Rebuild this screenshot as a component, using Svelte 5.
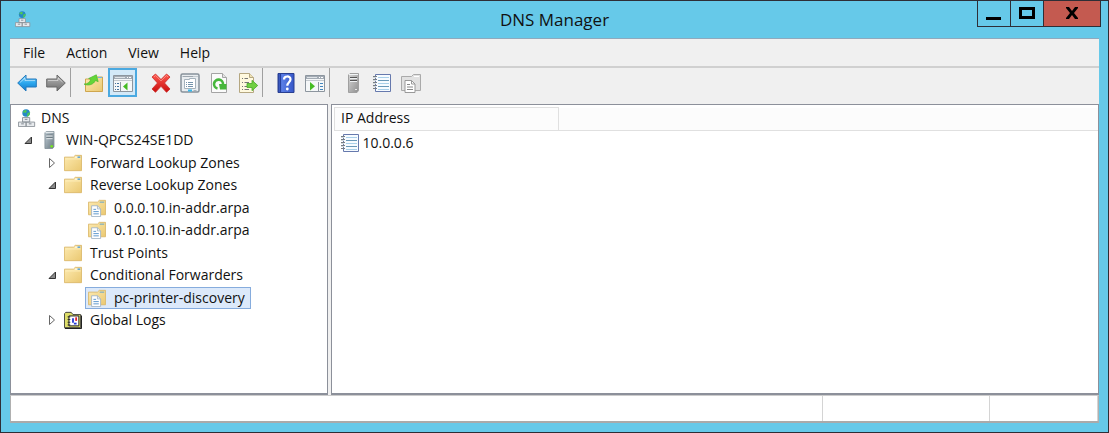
<script lang="ts">
	interface Node {
		label: string;
		icon: string;
		depth: number;
		open?: boolean;
	}

	interface Tool {
		icon: string;
		label: string;
	}

	const menus = ['File', 'Action', 'View', 'Help'];

	const toolGroups: { line: boolean; tools: Tool[] }[] = [
		{ line: true, tools: [{ icon: 'back', label: 'Back' }, { icon: 'forward', label: 'Forward' }] },
		{ line: false, tools: [{ icon: 'up', label: 'Up one level' }, { icon: 'tree', label: 'Show/Hide Console Tree' }] },
		{
			line: true,
			tools: [
				{ icon: 'delete', label: 'Delete' },
				{ icon: 'properties', label: 'Properties' },
				{ icon: 'refresh', label: 'Refresh' },
				{ icon: 'export', label: 'Export List' }
			]
		},
		{ line: true, tools: [{ icon: 'help', label: 'Help' }, { icon: 'actions', label: 'Show/Hide Action Pane' }] },
		{
			line: false,
			tools: [
				{ icon: 'graytower', label: 'New server' },
				{ icon: 'record', label: 'New record' },
				{ icon: 'grayzone', label: 'New zone' }
			]
		}
	];

	const nodes: Node[] = [
		{ label: 'DNS', icon: 'dns', depth: 0 },
		{ label: 'WIN-QPCS24SE1DD', icon: 'server', depth: 1, open: true },
		{ label: 'Forward Lookup Zones', icon: 'folder', depth: 2, open: false },
		{ label: 'Reverse Lookup Zones', icon: 'folder', depth: 2, open: true },
		{ label: '0.0.0.10.in-addr.arpa', icon: 'zone', depth: 3 },
		{ label: '0.1.0.10.in-addr.arpa', icon: 'zone', depth: 3 },
		{ label: 'Trust Points', icon: 'folder', depth: 2 },
		{ label: 'Conditional Forwarders', icon: 'folder', depth: 2, open: true },
		{ label: 'pc-printer-discovery', icon: 'zone', depth: 3 },
		{ label: 'Global Logs', icon: 'logs', depth: 2, open: false }
	];

	const addresses = ['10.0.0.6'];

	let selected = $state('pc-printer-discovery');
	let showTree = $state(true);
</script>

<!-- gradients shared by the icons -->
<svg class="defs" width="0" height="0" aria-hidden="true">
	<defs>
		<linearGradient id="g-blue" x1="0" y1="0" x2="0" y2="1">
			<stop offset="0" stop-color="#8fdcff" /><stop offset=".5" stop-color="#2ba7ee" /><stop offset="1" stop-color="#1478c8" />
		</linearGradient>
		<linearGradient id="g-gray" x1="0" y1="0" x2="0" y2="1">
			<stop offset="0" stop-color="#b9b9b9" /><stop offset="1" stop-color="#6c6c6c" />
		</linearGradient>
		<linearGradient id="g-folder" x1="0" y1="0" x2="1" y2="1">
			<stop offset="0" stop-color="#fdeab0" /><stop offset="1" stop-color="#eac871" />
		</linearGradient>
		<linearGradient id="g-red" x1="0" y1="0" x2="0" y2="1">
			<stop offset="0" stop-color="#ff5a50" /><stop offset="1" stop-color="#c80c0c" />
		</linearGradient>
		<linearGradient id="g-help" x1="0" y1="0" x2="1" y2="0">
			<stop offset="0" stop-color="#2743a8" /><stop offset=".25" stop-color="#5b7ee6" /><stop offset="1" stop-color="#3556c8" />
		</linearGradient>
		<linearGradient id="g-tower" x1="0" y1="0" x2="1" y2="1">
			<stop offset="0" stop-color="#c3d0d8" /><stop offset="1" stop-color="#66757e" />
		</linearGradient>
		<linearGradient id="g-pale" x1="0" y1="0" x2="1" y2="1">
			<stop offset="0" stop-color="#d6d6d6" /><stop offset="1" stop-color="#8f8f8f" />
		</linearGradient>
	</defs>
</svg>

{#snippet page(edge: string, line: string)}
	<path d="M4 7.500h6.500l3.500 3.500v8.500H4z" fill="#fff" stroke={edge} />
	<path d="M10.500 7.500V11H14" fill="none" stroke={edge} />
	<path d="M6 11.500h3M6 14h6M6 16.500h6" stroke={line} />
{/snippet}

{#snippet icon(name: string)}
	<svg class="icon" viewBox="0 0 20 20" aria-hidden="true">
		{#if name === 'back' || name === 'forward'}
			<path
				d={name === 'back' ? 'M.7 10 9 2v4h10.300v8H9v4z' : 'M19.300 10 11 2v4H.7v8H11v4z'}
				fill={name === 'back' ? 'url(#g-blue)' : 'url(#g-gray)'}
				stroke={name === 'back' ? '#2379bd' : '#696969'}
				stroke-linejoin="round"
			/>
			<path d={name === 'back' ? 'M3 9.500 8 5v2.500h10' : 'M2 7.500h10V5l4.500 4'} fill="none" stroke="#fff" opacity=".45" />
		{:else if name === 'up'}
			<path d="M1.500 18.500V6h9l2-2h6v14.500z" fill="url(#g-folder)" stroke="#cfa64e" />
			<path d="M14 4.500h4" stroke="#6fb5e8" />
			<path d="M2 14.500c3-1 4.500-4 4.500-7H4L9.500 1l4.500 5.500h-3c0 4.500-4 8-9 8z" transform="rotate(24 9 8)" fill="#63d638" stroke="#48b52b" stroke-width=".6" />
		{:else if name === 'tree' || name === 'actions'}
			<path d="M.5 2.500h19v16H.5z" fill="#f5f7f8" stroke="#8c959e" />
			<path d="M1 3h18v3H1z" fill="#a3abb4" />
			<path d="M2 4.500h10" stroke="#dfe4e8" /><path d="M14 4.500h1m1 0h2" stroke="#fff" />
			<path d="M1 7.500h18" stroke="#c3c9ce" />
			{#if name === 'tree'}
				<path d="M7.500 9v9" stroke="#8c959e" />
				<path d="M2 10.500h1m1 0h2M2 13.500h1m1 0h2M2 16.500h1m1 0h2" stroke="#45749f" />
				<path d="M14.500 9.500v8L10 13.500z" fill="#45bc23" />
			{:else}
				<path d="M13.500 9v9" stroke="#8c959e" />
				<path d="M15 10.500h3M15 13.500h3M15 16.500h3" stroke="#4185bd" />
				<path d="M5 9v8.500l5-4.200z" fill="#45bc23" />
			{/if}
		{:else if name === 'delete'}
			<path d="M1 4 4.500 1 10 6.500 15.500 1 19 4l-5.500 6 5.500 6-3.500 3.300-5.500-6-5.500 6L1 16l5.500-6z" fill="url(#g-red)" stroke="#cb2a26" stroke-width=".8" stroke-linejoin="round" />
			<path d="M3 4 4.500 2.500 10 8l5.500-5.500L17 4" fill="none" stroke="#ff9b92" opacity=".7" />
		{:else if name === 'properties'}
			<rect x="1" y="1" width="18" height="18" rx="1.500" fill="#e9edf0" stroke="#87919a" stroke-width="1.500" />
			<path d="M2.500 3.500h15" stroke="#9da6ae" stroke-dasharray="11 1 1 1" />
			<path d="M4.500 6.500h5v-1h6v10h-11z" fill="#fff" stroke="#a5b2bc" />
			<path d="M6 9.500h1m1 0h5M6 11.500h1m1 0h5M6 13.500h1m1 0h5" stroke="#7593ab" />
			<path d="M8 17.500h4" stroke="#35b8ec" stroke-width="2" /><path d="M13.500 17.500h3" stroke="#a7b2ba" />
		{:else if name === 'refresh'}
			<path d="M2.500.5h11l4 4v15h-15z" fill="#fbfbfb" stroke="#a4a4a4" />
			<path d="M13.500.5v4h4" fill="#e4e4e4" stroke="#a4a4a4" />
			<path d="M8.500 15.500A4.500 4.500 0 1 1 14 11.500" fill="none" stroke="#46b73b" stroke-width="2.600" />
			<path d="M10 11h7.500v5.500H11z" fill="#46b73b" />
		{:else if name === 'export'}
			<path d="M1.500.5h10l4 4v15h-14z" fill="#fff9df" stroke="#b5a781" />
			<path d="M11.500.5v4h4" fill="#eee2b7" stroke="#b5a781" />
			<path d="M4 5.500h1m1.500 0H10M4 9.500h1m1.500 0H11M4 13.500h1m1.500 0H11M4 16.500h1m1.500 0H11" stroke="#777" />
			<path d="M9 10.500h5V7.300l5.700 5.200-5.700 5.200v-3.200H9z" fill="#70cf42" stroke="#48a82a" stroke-width=".8" />
		{:else if name === 'help'}
			<path d="M2 .5h16v19H2z" fill="url(#g-help)" stroke="#293f91" />
			<path d="M4.500 1v18" stroke="#263f9c" />
			<path d="M8 6.500c0-4 6.500-4 6.500-.2 0 3-3.200 3-3.200 6.500" fill="none" stroke="#fff" stroke-width="2.200" />
			<circle cx="11.300" cy="16" r="1.400" fill="#fff" />
		{:else if name === 'server' || name === 'graytower'}
			<path d="M5.500 2 7 .5h8.500v17L14 19.500H5.500z" fill={name === 'server' ? 'url(#g-tower)' : 'url(#g-pale)'} stroke={name === 'server' ? '#83919a' : '#a0a0a0'} />
			<path d="M6 1.500h9" stroke="#f1f4f5" />
			<path d="M7 4.500h7M7 7.500h7" stroke={name === 'server' ? '#59666e' : '#555'} />
			<path d="M7 5.500h7M7 8.500h7" stroke="#edf0f2" />
			{#if name === 'server'}<circle cx="13" cy="17" r="1.500" fill="#76e521" />{:else}<path d="M12 16.500h2" stroke="#e7e7e7" />{/if}
		{:else if name === 'record'}
			<path d="M3.500 1.500h15v17h-15z" fill="#f6fbff" stroke="#6679ad" />
			<path d="M6 4.500h11M6 10.500h11M6 16.500h11" stroke="#a9d0e9" />
			<path d="M6 7.500h11M6 13.500h11" stroke="#6898b8" />
			<path d="M1 3.500h4M1 6.500h4M1 9.500h4M1 12.500h4M1 15.500h4" stroke="#777f85" />
			<path d="M1 4.500h3M1 7.500h3M1 10.500h3M1 13.500h3" stroke="#d3d8db" />
		{:else if name === 'folder'}
			<path d="M.5 18.500V3.500h10l2-2h7v17z" fill="url(#g-folder)" stroke="#dbb96b" />
			<path d="M12 3.500h6" stroke="#fff9e5" stroke-width="1.500" /><path d="M15 3.500h3" stroke="#4797d1" stroke-width="1.500" />
			<path d="M1.500 5.500h17" stroke="#fff0bd" />
		{:else if name === 'zone' || name === 'grayzone'}
			<path d="M.5 17.500v-14h10l2-2h7v16z" fill={name === 'zone' ? 'url(#g-folder)' : '#e1e1e1'} stroke={name === 'zone' ? '#dbb96b' : '#aaa'} />
			<path d="M13 3.500h5" stroke={name === 'zone' ? '#589fce' : '#fff'} />
			{@render page(name === 'zone' ? '#a3b5c6' : '#999', name === 'zone' ? '#4f8fc9' : '#888')}
		{:else if name === 'dns'}
			<circle cx="9" cy="4.500" r="4.200" fill="#2588c7" />
			<path d="M5.500 3c2-3 5-2 4 0s-1 1.500-2 1-2 1-2-1zm5 1.500 3-1c0 3-1.500 4.500-3.500 5z" fill="#4dc956" />
			<path d="M5 9.500h8v5H5zM.5 14.500H9v5H.5zM9 14.500h9.500v5H9z" fill="#e7eaed" stroke="#8b9298" />
			<path d="M7.500 11.500h3M3.500 16.500h3M12 16.500h3" stroke="#777f88" />
		{:else if name === 'logs'}
			<path d="M.5 18.500V3L2 1.500h6L10 4h8.500v14.500z" fill="#dede6a" stroke="#333" />
			<path d="M1 19.500h18.500V5" fill="none" stroke="#000" />
			<path d="M5.500 5.500h11v11h-11z" fill="#fff" stroke="#111" />
			<path d="M4 6.500h3M4 9.500h3M4 12.500h3M4 15.500h3" stroke="#222" />
			<path d="M9 8h2v5H9z" fill="#2539d5" /><path d="M12.500 7h2v4h-2z" fill="#e0212c" /><path d="M11 13h3v2h-3z" fill="#2539d5" />
		{/if}
	</svg>
{/snippet}

<div class="window">
	<header class="titlebar">
		<div class="app-icon">{@render icon('dns')}</div>
		<h1>DNS Manager</h1>
		<div class="controls">
			<button aria-label="Minimize">
				<svg width="16" height="14" viewBox="0 0 16 14"><path d="M0 11h15v3H0z" /></svg>
			</button>
			<button aria-label="Maximize">
				<svg width="16" height="14" viewBox="0 0 16 14"><path d="M0 1h16v12H0zm3 3v6h10V4z" fill-rule="evenodd" /></svg>
			</button>
			<button class="close" aria-label="Close">
				<svg width="14" height="14" viewBox="0 0 14 14"><path d="M1 1h3l3 4 3-4h3v1L9 7l4 5v1h-3L7 9l-3 4H1v-1l4-5-4-5z" /></svg>
			</button>
		</div>
	</header>

	<div class="client">
		<nav class="menubar">
			{#each menus as m}
				<button>{m}</button>
			{/each}
		</nav>

		<div class="toolbar" role="toolbar" aria-label="Standard">
			{#each toolGroups as group, i}
				<div class="group">
					{#each group.tools as t}
						{#if t.icon === 'tree'}
							<button class:pressed={showTree} aria-label={t.label} aria-pressed={showTree} onclick={() => (showTree = !showTree)}>
								{@render icon(t.icon)}
							</button>
						{:else}
							<button aria-label={t.label}>{@render icon(t.icon)}</button>
						{/if}
					{/each}
				</div>
				{#if i < toolGroups.length - 1}
					<span class="sep" class:line={group.line}></span>
				{/if}
			{/each}
		</div>

		<main class="panes">
			{#if showTree}
				<ul class="pane tree">
					{#each nodes as n}
						<li class="depth-{n.depth}">
							{#if n.open !== undefined}
								<button class="expander" aria-label={n.open ? 'Collapse' : 'Expand'} aria-expanded={n.open}>
									<svg width="10" height="12" viewBox="0 0 10 12">
										{#if n.open}
											<path d="M8.500 3v6.500H2z" fill="#8a8a8a" stroke="#333" />
										{:else}
											<path d="M2.500 1.500v9l5-4.500z" fill="#fff" stroke="#666" />
										{/if}
									</svg>
								</button>
							{:else if n.depth > 0}
								<span class="expander"></span>
							{/if}
							<button class="item" class:selected={selected === n.label} onclick={() => (selected = n.label)}>
								{@render icon(n.icon)}
								<span>{n.label}</span>
							</button>
						</li>
					{/each}
				</ul>
			{/if}

			<section class="pane list">
				<table>
					<thead>
						<tr><th>IP Address</th><td></td></tr>
					</thead>
					<tbody>
						{#each addresses as ip}
							<tr>
								<td colspan="2"><div class="cell">{@render icon('record')}{ip}</div></td>
							</tr>
						{/each}
					</tbody>
				</table>
			</section>
		</main>

		<footer class="status">
			<span></span>
			<span></span>
			<span></span>
		</footer>
	</div>
</div>

<style>
	:global(body) {
		margin: 0;
	}

	.defs {
		position: absolute;
	}

	.window {
		display: flex;
		flex-direction: column;
		box-sizing: border-box;
		min-height: 100vh;
		padding: 0 9px 9px;
		border: 1px solid #2e2e36;
		background: #66c9e9;
		color: #111;
		font: 14px/20px "Open Sans", "Noto Sans", sans-serif;
	}

	button {
		margin: 0;
		padding: 0;
		border: 0;
		background: none;
		color: inherit;
		font: inherit;
	}

	svg {
		display: block;
		flex: none;
	}

	.icon {
		width: 20px;
		height: 20px;
	}

	.titlebar {
		display: grid;
		grid-template-columns: 1fr auto 1fr;
		height: 37px;
	}

	.app-icon {
		padding: 8px 5px;
	}

	.app-icon .icon {
		width: 16px;
	}

	h1 {
		margin: 0;
		font-size: 17px;
		font-weight: 400;
		line-height: 38px;
	}

	.controls {
		display: flex;
		justify-self: end;
		height: 25px;
		border: 1px solid #2e2e36;
		border-top: 0;
		margin-right: -2px;
	}

	.controls button {
		display: grid;
		place-items: center;
		width: 33px;
		padding-bottom: 2px;
		border-right: 1px solid #2e2e36;
	}

	.controls .close {
		width: 56px;
		border: 0;
		background: #c45a50;
	}

	.client {
		display: flex;
		flex: 1;
		flex-direction: column;
		border-top: 1px solid #8fa9bd;
		background: #f0f0f0;
	}

	.menubar {
		display: flex;
		gap: 21px;
		height: 27px;
		padding-left: 13px;
		border-bottom: 2px solid #d0d0d0;
	}

	.toolbar {
		display: flex;
		height: 29px;
		padding: 0 2px 7px;
	}

	.group {
		display: flex;
	}

	.toolbar button {
		display: grid;
		place-items: center;
		box-sizing: border-box;
		width: 29px;
		height: 29px;
	}

	.toolbar .pressed {
		border: 2px solid #4ba9e0;
		background: #d3e9f8;
	}

	.sep {
		box-sizing: border-box;
		width: 9px;
	}

	.sep.line {
		border-left: 1px solid #a0a0a0;
	}

	.panes {
		display: flex;
		flex: 1;
		gap: 3px;
	}

	.pane {
		box-sizing: border-box;
		border: 1px solid #8c909a;
		border-bottom-width: 2px;
		background: #fff;
	}

	.tree {
		width: 318px;
		margin: 0;
		padding: 1px 0 0 1px;
		list-style: none;
	}

	.tree li {
		display: flex;
		align-items: center;
		height: 23px;
		padding-left: 6px;
	}

	.tree li:nth-child(even) {
		height: 22px;
	}

	.tree .depth-0 {
		padding-left: 3px;
	}

	.tree .depth-2 {
		padding-left: 30px;
	}

	.tree .depth-3 {
		padding-left: 54px;
	}

	.expander {
		display: grid;
		place-items: center;
		width: 19px;
		height: 22px;
	}

	.item {
		display: flex;
		align-items: center;
		gap: 8px;
		box-sizing: border-box;
		height: 22px;
		padding: 0 5px 0 2px;
		border: 1px solid transparent;
		white-space: nowrap;
	}

	.item .icon {
		width: 18px;
		height: 18px;
	}

	.item.selected {
		border-color: #86acdd;
		background: #dce9fa;
	}

	.depth-0 .item {
		gap: 5px;
	}

	.list {
		flex: 1;
		padding: 2px 0 0 2px;
	}

	table {
		width: 100%;
		border-collapse: collapse;
	}

	th,
	td {
		padding: 0;
		font-weight: 400;
		text-align: left;
	}

	th {
		width: 217px;
		height: 20px;
		padding: 0 0 2px 6px;
		border: 1px solid #e0e0e0;
	}

	thead {
		background: #fcfcfc;
	}

	thead td {
		border-bottom: 1px solid #e0e0e0;
	}

	.cell {
		display: flex;
		align-items: center;
		gap: 3px;
		height: 23px;
		padding-left: 5px;
	}

	.status {
		display: flex;
		height: 25px;
		border: 1px solid #b0b0b0;
		border-top-color: #ccc;
		border-bottom: 2px solid #aaa;
		background: #fff;
	}

	.status span {
		box-sizing: border-box;
		width: 108px;
		border-right: 1px solid #d4d4d4;
	}

	.status span:first-child {
		flex: 1;
	}

	.status span:nth-child(2) {
		width: 167px;
	}
</style>
